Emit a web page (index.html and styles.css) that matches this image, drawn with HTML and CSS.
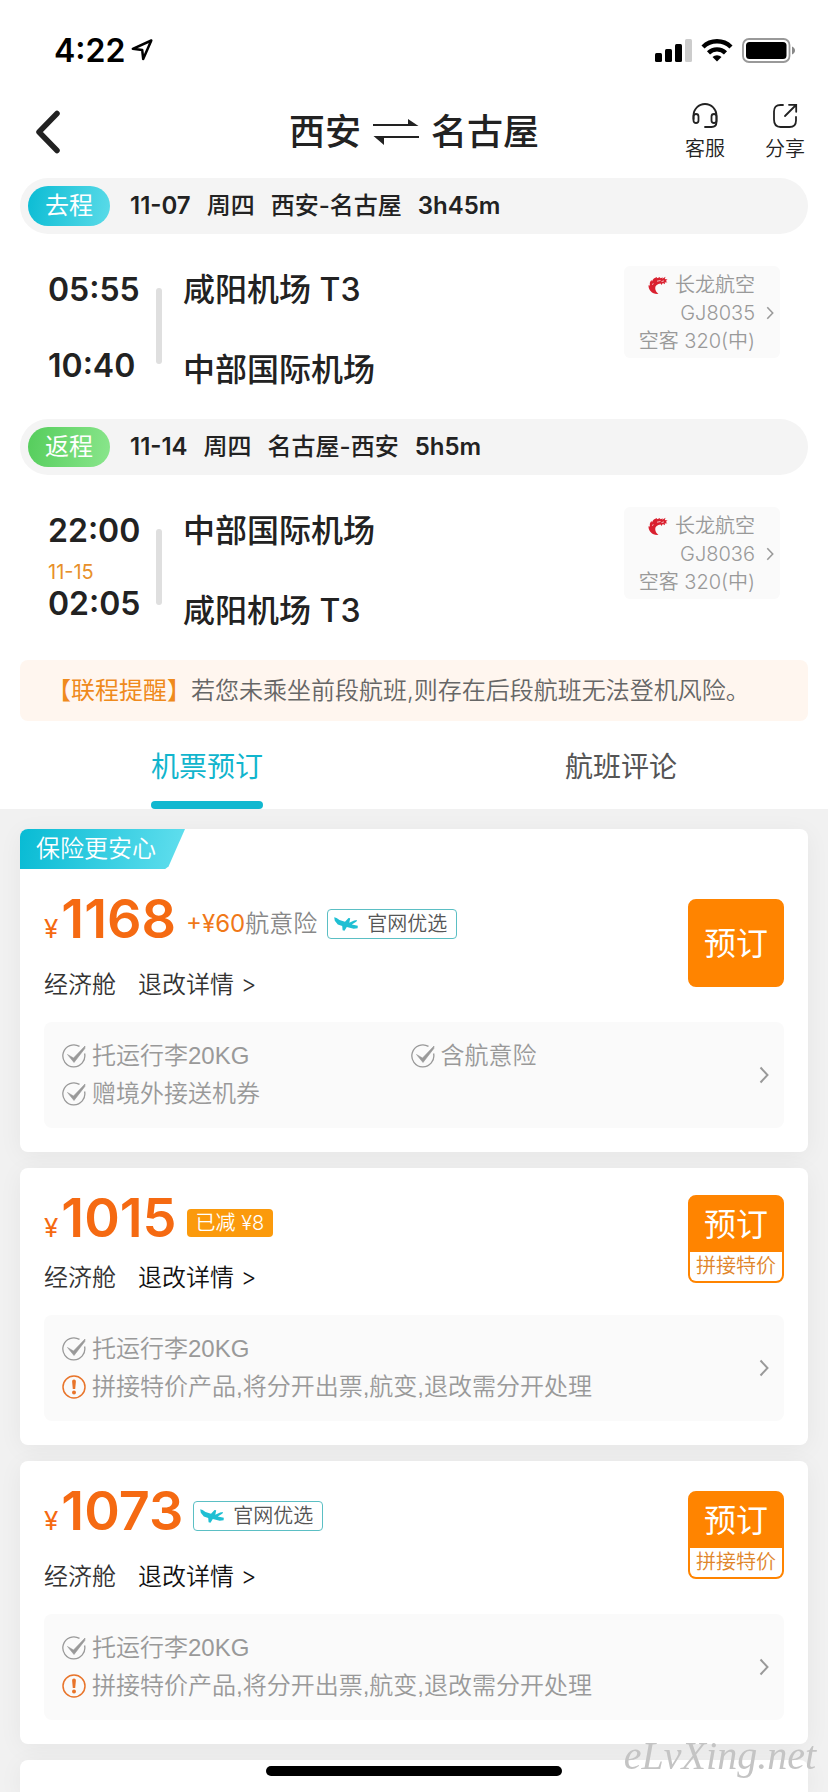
FILE: index.html
```html
<!DOCTYPE html>
<html lang="zh-CN">
<head>
<meta charset="utf-8">
<meta name="viewport" content="width=device-width, initial-scale=1">
<title>西安 ⇌ 名古屋</title>
<link rel="stylesheet" href="styles.css">
</head>
<body>
<svg class="sprite" aria-hidden="true">
  <symbol id="chevron" viewBox="0 0 10 18"><path d="M1.5 1.5 8.5 9l-7 7.5" fill="none" stroke="currentColor" stroke-width="2"/></symbol>
  <symbol id="check" viewBox="0 0 24 24">
    <path d="M17.5 2.4A11 11 0 1 0 22.6 9.500" fill="none" stroke="currentColor" stroke-width="1.300"/>
    <path d="M5.500 10.500 11.500 14 23 2 22.800 4.500 12 18.500Z" fill="currentColor" stroke="currentColor" stroke-width=".6"/>
  </symbol>
  <symbol id="alert" viewBox="0 0 24 24">
    <circle cx="12" cy="12" r="11" fill="none" stroke="currentColor" stroke-width="1.500"/>
    <path d="M12 4.500a1.900 1.900 0 0 1 1.900 2L13.200 14h-2.400L10.100 6.500a1.900 1.900 0 0 1 1.900-2Z" fill="currentColor"/>
    <circle cx="12" cy="17.500" r="2" fill="currentColor"/>
  </symbol>
  <symbol id="plane" viewBox="0 0 24 14">
    <path d="M.2.3 2.600 1 5.500 3 11 4.800 14.500 1.100l1.700.1-.9 4.500 4.800-2.300 2.900-.3-.5 1.500L17.800 7.500l6 1.200-.2 2.600-3.900.5L12.800 9.900 10.500 13.800 8.600 13.200 8.200 9 3.800 7.600.8 3.800Z" fill="currentColor"/>
  </symbol>
  <symbol id="dragon" viewBox="0 0 20 19">
    <path d="M10.500 17.800C4.500 18.500.3 14.300.5 9.200L2 9.600C1.400 7.500 2 5.600 3.400 4l.6 1.500C4.800 3.300 6.600 1.700 9 1.100L8.800 2.300 12.300.9 11.800 2.200 15.200 1.400 14 3l3.500-2.200-.7 2.300 2.700.3-1.700 1.500 1.600 1.300-2.700.3.3 1.800-2.200-1.200-1.300 2-.9-1.600C9.500 7.800 7.200 9.400 7.200 12c0 2.600 1.500 4.600 3.300 5.800Z" fill="#d9202f"/>
    <path d="M9 5.200 12.500 4.500M13.500 5.600l2.400-.7M4 8.500 5.500 7.700" stroke="#fff" stroke-width=".7" fill="none"/>
  </symbol>
</svg>

<div class="status">
  <div class="clock">4:22
    <svg width="22" height="22" viewBox="0 0 22 22"><path d="M20.300 1.500 1.800 9.800 11.200 11l1 9Z" fill="none" stroke="#000" stroke-width="2.500" stroke-linejoin="round"/></svg>
  </div>
  <div class="signals">
    <svg width="37" height="23" viewBox="0 0 37 23"><rect y="14" width="7" height="9" rx="1.500"/><rect x="10" y="10" width="7" height="13" rx="1.500"/><rect x="20" y="5" width="7" height="18" rx="1.500"/><rect x="30" width="7" height="23" rx="1.500" fill="#ccc"/></svg>
    <svg width="32" height="24" viewBox="0 0 32 24"><g fill="none" stroke="#000" stroke-width="4.400"><path d="M2 9a20 20 0 0 1 28 0"/><path d="M7.500 14.800a12.200 12.200 0 0 1 17 0"/></g><path d="M16 23.500 11.500 19a6.500 6.500 0 0 1 9 0Z"/></svg>
    <svg width="54" height="25" viewBox="0 0 54 25"><rect x="1" y="1" width="46.500" height="23" rx="6" fill="none" stroke="#999" stroke-width="1.800"/><rect x="4" y="4" width="40.500" height="17" rx="3.500"/><path d="M50 8.500c4 1.500 4 6.500 0 8Z" fill="#888"/></svg>
  </div>
</div>

<header class="nav">
  <button class="back" aria-label="返回"><svg width="26" height="44" viewBox="0 0 26 44"><path d="M22 3.500 4 22l18 18.500" fill="none" stroke="#222" stroke-width="5.500" stroke-linecap="round" stroke-linejoin="round"/></svg></button>
  <h1 class="title"><span>西安</span>
    <svg width="46" height="26" viewBox="0 0 46 26"><g fill="#222"><path d="M0 5h35V0l10.500 7H0Z"/><path d="M46 19H11v7L.5 17H46Z"/></g></svg>
    <span>名古屋</span></h1>
  <div class="actions">
    <button class="action"><svg width="26" height="26" viewBox="0 0 26 26"><g fill="none" stroke="#222" stroke-width="1.800" stroke-linecap="round"><path d="M1.500 16v-3.500a11.500 11.500 0 0 1 23 0V19q0 5-5 5h-6.500"/><rect x="1.500" y="11" width="5" height="9" rx="2.500"/><rect x="19.500" y="11" width="5" height="9" rx="2.500"/></g></svg>客服</button>
    <button class="action"><svg width="26" height="26" viewBox="0 0 26 26"><g fill="none" stroke="#222" stroke-width="1.800" stroke-linecap="round"><path d="M11 2H8.500Q2 2 2 8.500v8Q2 24 8.500 24h9q6.500 0 6.500-6.500V14M13 13 23.500 2.500M17 1.800h7.200v7"/></g></svg>分享</button>
  </div>
</header>

<main>
  <section class="trip">
    <div class="leg-head"><span class="badge out">去程</span><span class="num">11-07</span><span>周四</span><span>西安-名古屋</span><span class="num">3h45m</span></div>
    <div class="leg">
      <div class="times"><time>05:55</time><time>10:40</time></div>
      <div class="bar"></div>
      <div class="places"><span>咸阳机场 T3</span><span>中部国际机场</span></div>
      <button class="airline">
        <span class="airline-info"><span class="carrier"><svg width="20" height="19"><use href="#dragon"/></svg>长龙航空</span><span>GJ8035</span><span>空客 320(中)</span></span>
        <svg width="8" height="14"><use href="#chevron"/></svg>
      </button>
    </div>
    <div class="leg-head"><span class="badge ret">返程</span><span class="num">11-14</span><span>周四</span><span>名古屋-西安</span><span class="num">5h5m</span></div>
    <div class="leg">
      <div class="times overnight"><time>22:00</time><span class="next-day">11-15</span><time>02:05</time></div>
      <div class="bar"></div>
      <div class="places"><span>中部国际机场</span><span>咸阳机场 T3</span></div>
      <button class="airline">
        <span class="airline-info"><span class="carrier"><svg width="20" height="19"><use href="#dragon"/></svg>长龙航空</span><span>GJ8036</span><span>空客 320(中)</span></span>
        <svg width="8" height="14"><use href="#chevron"/></svg>
      </button>
    </div>
    <p class="notice"><strong>【联程提醒】</strong>若您未乘坐前段航班,则存在后段航班无法登机风险。</p>
  </section>

  <nav class="tabs">
    <button class="tab active">机票预订</button>
    <button class="tab">航班评论</button>
  </nav>

  <section class="offers">
    <article class="card">
      <div class="ribbon">保险更安心</div>
      <div class="offer">
        <div>
          <div class="price-row">
            <span class="price"><small>¥</small>1168</span>
            <span class="extra"><b>+¥60</b>航意险</span>
            <span class="tag"><svg width="24" height="14"><use href="#plane"/></svg>官网优选</span>
          </div>
          <div class="meta"><span>经济舱</span><a href="#">退改详情 &gt;</a></div>
        </div>
        <button class="book"><span>预订</span></button>
      </div>
      <div class="perks">
        <ul>
          <li><svg width="24" height="24"><use href="#check"/></svg>托运行李20KG</li>
          <li><svg width="24" height="24"><use href="#check"/></svg>含航意险</li>
          <li><svg width="24" height="24"><use href="#check"/></svg>赠境外接送机券</li>
        </ul>
        <svg class="more" width="10" height="18"><use href="#chevron"/></svg>
      </div>
    </article>

    <article class="card">
      <div class="offer">
        <div>
          <div class="price-row tight">
            <span class="price"><small>¥</small>1015</span>
            <span class="discount">已减 ¥8</span>
          </div>
          <div class="meta dark"><span>经济舱</span><a href="#">退改详情 &gt;</a></div>
        </div>
        <button class="book"><span>预订</span><span class="book-note">拼接特价</span></button>
      </div>
      <div class="perks">
        <ul>
          <li class="wide"><svg width="24" height="24"><use href="#check"/></svg>托运行李20KG</li>
          <li class="wide"><svg class="warn" width="24" height="24"><use href="#alert"/></svg>拼接特价产品,将分开出票,航变,退改需分开处理</li>
        </ul>
        <svg class="more" width="10" height="18"><use href="#chevron"/></svg>
      </div>
    </article>

    <article class="card">
      <div class="offer">
        <div>
          <div class="price-row">
            <span class="price"><small>¥</small>1073</span>
            <span class="tag"><svg width="24" height="14"><use href="#plane"/></svg>官网优选</span>
          </div>
          <div class="meta dark"><span>经济舱</span><a href="#">退改详情 &gt;</a></div>
        </div>
        <button class="book"><span>预订</span><span class="book-note">拼接特价</span></button>
      </div>
      <div class="perks">
        <ul>
          <li class="wide"><svg width="24" height="24"><use href="#check"/></svg>托运行李20KG</li>
          <li class="wide"><svg class="warn" width="24" height="24"><use href="#alert"/></svg>拼接特价产品,将分开出票,航变,退改需分开处理</li>
        </ul>
        <svg class="more" width="10" height="18"><use href="#chevron"/></svg>
      </div>
    </article>

    <article class="card next"></article>
  </section>
</main>
<div class="home-indicator"></div>
<div class="watermark">eLvXing.net</div>
</body>
</html>
```
FILE: styles.css
```css
* { box-sizing: border-box; }
body {
  margin: 0;
  min-height: 100vh;
  display: flex;
  flex-direction: column;
  background: #fff;
  color: #222;
  font-family: Inter, "Noto Sans CJK SC", sans-serif;
  font-size: 24px;
}
button {
  border: 0;
  padding: 0;
  background: none;
  color: inherit;
  font: inherit;
  cursor: pointer;
}
svg { display: block; flex: none; }
.sprite { position: absolute; width: 0; height: 0; }

.status {
  display: flex;
  justify-content: space-between;
  align-items: center;
  height: 92px;
  padding: 8px 32px 0 54px;
  color: #000;
}
.clock { display: flex; align-items: center; gap: 6px; font-size: 32px; font-weight: 600; }
.signals { display: flex; align-items: center; gap: 9px; }

.nav {
  display: grid;
  grid-template-columns: 1fr auto 1fr;
  align-items: center;
  height: 86px;
  padding: 0 23px 6px;
}
.back { justify-self: start; padding-left: 12px; }
.title {
  display: flex;
  align-items: center;
  gap: 12px;
  margin: 0;
  font-size: 36px;
  font-weight: 500;
  line-height: 48px;
}
.actions { display: flex; justify-content: flex-end; gap: 40px; }
.action {
  display: flex;
  flex-direction: column;
  align-items: center;
  gap: 8px;
  font-size: 20px;
  font-weight: 350;
  line-height: 24px;
}

.trip { padding: 0 20px; }
.leg-head {
  display: flex;
  align-items: center;
  gap: 16px;
  height: 56px;
  padding: 0 8px;
  border-radius: 28px;
  background: #f4f4f4;
  font-weight: 500;
  line-height: 32px;
}
.num { font-weight: 600; }
.badge {
  display: grid;
  place-items: center;
  width: 82px;
  height: 40px;
  margin-right: 4px;
  border-radius: 20px;
  color: #fff;
  font-weight: 400;
}
.out { background: linear-gradient(100deg, #0bbcd4, #5bdbe8); }
.ret { background: linear-gradient(100deg, #55cd5c, #8ae68c); }
.leg {
  display: flex;
  height: 185px;
  padding: 32px 28px 0 28px;
}
.times, .places {
  display: flex;
  flex-direction: column;
  justify-content: space-between;
  height: 120px;
  padding-top: 4px;
  font-size: 32px;
  font-weight: 600;
  line-height: 40px;
}
.times { width: 108px; }
.overnight { height: 117px; }
.places { flex: 1; height: 124px; font-weight: 500; }
.next-day {
  margin-top: auto;
  color: #e8902a;
  font-size: 20px;
  font-weight: 400;
  line-height: 24px;
}
.bar { width: 6px; height: 76px; margin: 22px 21px 0 0; border-radius: 3px; background: #dfdfdf; }
.airline {
  display: flex;
  align-items: center;
  gap: 11px;
  height: 92px;
  padding: 2px 6px 0 15px;
  border-radius: 6px;
  background: #fafafa;
  color: #999;
  font-size: 20px;
  font-weight: 350;
  line-height: 28px;
  text-align: right;
}
.airline-info { display: flex; flex-direction: column; }
.carrier { display: flex; align-items: center; justify-content: flex-end; gap: 7px; }

.notice {
  margin: 0;
  padding: 15px 20px 14px 27px;
  border-radius: 8px;
  background: #fff6ef;
  color: #666;
  font-weight: 350;
  line-height: 32px;
}
.notice strong { color: #ef8a1c; font-weight: 400; }

.tabs { display: grid; grid-template-columns: 1fr 1fr; height: 88px; }
.tab {
  justify-self: center;
  padding: 12px 0 0;
  border-bottom: 8px solid transparent;
  color: #555;
  font-size: 28px;
  line-height: 40px;
}
.active { position: relative; color: #11b5cd; }
.active::after {
  content: "";
  position: absolute;
  left: 0;
  right: 0;
  bottom: -8px;
  height: 8px;
  border-radius: 4px;
  background: #11b8d0;
}

main, .offers { flex: 1; display: flex; flex-direction: column; }
.offers { gap: 16px; padding: 20px 20px 0; background: #f1f1f1; overflow: hidden; }
.card {
  padding-bottom: 24px;
  border-radius: 8px;
  background: #fff;
  box-shadow: 0 4px 24px rgba(0, 0, 0, 0.05);
}
.next { flex: 1; min-height: 32px; padding: 0; border-radius: 8px 8px 0 0; }
.ribbon {
  width: 165px;
  padding-left: 16px;
  border-radius: 8px 0 0 0;
  background: linear-gradient(100deg, #08bbd4, #62dfee);
  clip-path: polygon(0 0, 100% 0, 90% 94%, 88% 100%, 0 100%);
  color: #fff;
  font-weight: 350;
  line-height: 40px;
}
.offer {
  display: flex;
  justify-content: space-between;
  align-items: center;
  padding: 16px 24px 0;
}
.price-row { display: flex; align-items: center; gap: 10px; height: 72px; margin-bottom: 12px; padding-top: 6px; }
.tight { margin-bottom: 6px; }
.price { color: #f56a12; font-size: 54px; font-weight: 600; line-height: 64px; }
.price small { margin-right: 3px; font-size: 26px; font-weight: 400; }
.extra { padding-bottom: 6px; color: #888; font-weight: 350; }
.extra b { color: #f07818; font-weight: 400; }
.tag {
  display: flex;
  align-items: center;
  gap: 9px;
  height: 30px;
  padding: 0 9px 0 6px;
  border: 1px solid #5bbfc4;
  border-radius: 4px;
  color: #555;
  font-size: 20px;
  font-weight: 350;
  line-height: 28px;
}
.tag svg { color: #1fbfd3; }
.discount {
  padding: 0 9px;
  border-radius: 4px;
  background: #fb9a0c;
  color: #fff;
  font-size: 20px;
  font-weight: 350;
  line-height: 28px;
}
.meta { display: flex; gap: 22px; line-height: 32px; color: #333; font-weight: 350; }
.meta a { color: inherit; text-decoration: none; }
.dark a { color: #111; }
.book {
  display: flex;
  flex-direction: column;
  justify-content: center;
  width: 96px;
  height: 88px;
  border: 2px solid #ff8400;
  border-radius: 8px;
  background: #ff8400;
  color: #fff;
  font-size: 32px;
  line-height: 55px;
  overflow: hidden;
}
.book span { width: 100%; }
.book .book-note {
  background: #fff;
  color: #e0852a;
  font-size: 20px;
  font-weight: 350;
  line-height: 29px;
}
.perks {
  display: flex;
  align-items: center;
  margin: 21px 24px 0;
  padding: 15px 15px 15px 18px;
  border-radius: 8px;
  background: #fafafa;
  color: #999;
  font-family: "Liberation Sans", "Noto Sans CJK SC", sans-serif;
  font-weight: 350;
}
.perks ul {
  flex: 1;
  display: grid;
  grid-template-columns: 1fr 1fr;
  margin: 0;
  padding: 0;
  list-style: none;
}
.perks li { display: flex; align-items: center; gap: 6px; line-height: 38px; }
.perks .wide { grid-column: 1 / -1; }
.warn { color: #e8742a; }

.home-indicator {
  position: fixed;
  left: 50%;
  bottom: 16px;
  width: 296px;
  height: 10px;
  margin-left: -148px;
  border-radius: 5px;
  background: #000;
}
.watermark {
  position: fixed;
  right: 12px;
  bottom: 12px;
  color: #c4c4c4;
  font-family: "Liberation Serif", serif;
  font-size: 40px;
  font-style: italic;
  line-height: 48px;
}
```
